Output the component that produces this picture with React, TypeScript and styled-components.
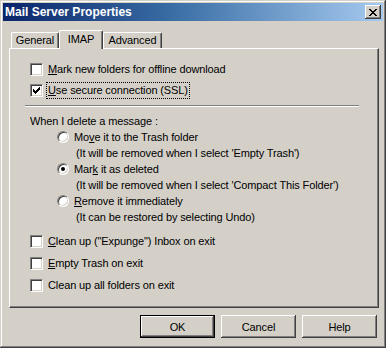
import React from "react";
import styled, { createGlobalStyle } from "styled-components";

const GlobalStyle = createGlobalStyle`
    html, body {
        margin: 0;
        padding: 0;
        background-color: #d4d0c8;
    }
    * {
        box-sizing: border-box;
    }
`

const FONT = `"Liberation Sans", Arial, sans-serif`;

const Window = styled.div`
    width: 386px;
    height: 348px;
    padding: 3px;
    background-color: #d4d0c8;
    font-family: ${FONT};
    font-size: 11px;
    letter-spacing: -0.12px;
    color: #000;
    box-shadow:
        inset -1px -1px #404040,
        inset 1px 1px #d4d0c8,
        inset -2px -2px #808080,
        inset 2px 2px #ffffff;
`

const TitleBar = styled.div`
    height: 18px;
    display: flex;
    align-items: center;
    justify-content: space-between;
    padding: 0 2px 0 2px;
    background: linear-gradient(to right, #0a246a 0%, #3a6ea5 45%, #a6caf0 100%);
    color: white;
    font-weight: bold;
    font-size: 12px;
    letter-spacing: 0;
    white-space: nowrap;
`

const CloseButton = styled.div`
    width: 16px;
    height: 14px;
    display: flex;
    align-items: center;
    justify-content: center;
    background-color: #d4d0c8;
    box-shadow:
        inset -1px -1px #404040,
        inset 1px 1px #ffffff,
        inset -2px -2px #808080;
`

const Body = styled.div`
    padding: 9px 5px 0 6px;
`

const TabRow = styled.div`
    display: flex;
    align-items: flex-end;
    height: 18px;
    padding-left: 2px;
    position: relative;
    z-index: 1;
`

const Tab = styled.div<{ $width: number; $selected?: boolean }>`
    width: ${p => p.$width}px;
    height: ${p => (p.$selected ? 19 : 16)}px;
    margin-bottom: ${p => (p.$selected ? -1 : 0)}px;
    display: flex;
    justify-content: center;
    padding-top: ${p => (p.$selected ? 2 : 1)}px;
    background-color: #d4d0c8;
    border-top: 1px solid #ffffff;
    border-left: 1px solid #ffffff;
    border-right: 1px solid #404040;
    border-top-left-radius: 2px;
    border-top-right-radius: 2px;
    box-shadow: inset -1px 0 #808080;
    line-height: 13px;
`

const Panel = styled.div`
    width: 370px;
    height: 260px;
    padding: 12px 0 0 20px;
    border-top: 1px solid #ffffff;
    border-left: 1px solid #ffffff;
    border-right: 1px solid #404040;
    border-bottom: 1px solid #404040;
    box-shadow: inset -1px -1px #808080;
    display: flex;
    flex-direction: column;
`

const Row = styled.div<{ $top?: number; $indent?: number }>`
    height: 16px;
    display: flex;
    align-items: center;
    gap: 5px;
    margin-top: ${p => p.$top ?? 0}px;
    margin-left: ${p => p.$indent ?? 0}px;
    white-space: nowrap;
`

const Label = styled.span<{ $focus?: boolean }>`
    line-height: 13px;
    padding: 1px 1px;
    margin-left: -2px;
    border: 1px dotted ${p => (p.$focus ? "#000" : "transparent")};
`

const Note = styled.div`
    height: 16px;
    display: flex;
    align-items: center;
    margin-left: 46px;
    white-space: nowrap;
`

const Heading = styled.div`
    height: 16px;
    display: flex;
    align-items: center;
    margin-top: 6px;
`

const Separator = styled.div`
    width: 334px;
    height: 2px;
    margin: 7px 0 0 -5px;
    border-top: 1px solid #808080;
    border-bottom: 1px solid #ffffff;
`

const CheckBox = styled.div`
    width: 13px;
    height: 13px;
    flex: none;
    display: flex;
    align-items: center;
    justify-content: center;
    background-color: white;
    border-top: 1px solid #808080;
    border-left: 1px solid #808080;
    border-right: 1px solid #ffffff;
    border-bottom: 1px solid #ffffff;
    box-shadow: inset 1px 1px #404040, inset -1px -1px #d4d0c8;
`

const Radio = styled.div`
    width: 12px;
    height: 12px;
    flex: none;
    display: flex;
    align-items: center;
    justify-content: center;
    border-radius: 50%;
    background-color: white;
    border-top: 1px solid #808080;
    border-left: 1px solid #808080;
    border-right: 1px solid #ffffff;
    border-bottom: 1px solid #ffffff;
    box-shadow: inset 1px 1px #404040, inset -1px -1px #d4d0c8;
`

const Dot = styled.div`
    width: 4px;
    height: 4px;
    border-radius: 50%;
    background-color: #000;
`

const ButtonRow = styled.div`
    width: 370px;
    display: flex;
    justify-content: flex-end;
    gap: 6px;
    margin-top: 7px;
    padding-right: 2px;
`

const Button = styled.div<{ $default?: boolean }>`
    width: 75px;
    height: 23px;
    display: flex;
    align-items: center;
    justify-content: center;
    background-color: #d4d0c8;
    border: ${p => (p.$default ? "1px solid #000" : "none")};
    box-shadow:
        inset -1px -1px #404040,
        inset 1px 1px #ffffff,
        inset -2px -2px #808080;
`

const CheckMark = () => (
    <svg width="7" height="7" viewBox="0 0 7 7" shapeRendering="crispEdges">
        {[2, 3, 4, 3, 2, 1, 0].map((y, x) => (
            <rect key={x} x={x} y={y} width="1" height="3" fill="#000" />
        ))}
    </svg>
)

const CloseGlyph = () => (
    <svg width="8" height="7" viewBox="0 0 8 7" shapeRendering="crispEdges">
        <rect x="0" y="0" width="2" height="1" />
        <rect x="6" y="0" width="2" height="1" />
        <rect x="1" y="1" width="2" height="1" />
        <rect x="5" y="1" width="2" height="1" />
        <rect x="2" y="2" width="4" height="1" />
        <rect x="3" y="3" width="2" height="1" />
        <rect x="2" y="4" width="4" height="1" />
        <rect x="1" y="5" width="2" height="1" />
        <rect x="5" y="5" width="2" height="1" />
        <rect x="0" y="6" width="2" height="1" />
        <rect x="6" y="6" width="2" height="1" />
    </svg>
)

export default function App() {
    return (
        <>
            <GlobalStyle />
            <Window>
                <TitleBar>
                    <span>Mail Server Properties</span>
                    <CloseButton><CloseGlyph /></CloseButton>
                </TitleBar>
                <Body>
                    <TabRow>
                        <Tab $width={48}>General</Tab>
                        <Tab $width={44} $selected>IMAP</Tab>
                        <Tab $width={59}>Advanced</Tab>
                    </TabRow>
                    <Panel>
                        <Row>
                            <CheckBox />
                            <Label><u>M</u>ark new folders for offline download</Label>
                        </Row>
                        <Row $top={5}>
                            <CheckBox><CheckMark /></CheckBox>
                            <Label $focus><u>U</u>se secure connection (SSL)</Label>
                        </Row>
                        <Separator />
                        <Heading>When I delete a message :</Heading>
                        <Row $indent={27}>
                            <Radio />
                            <Label>Mo<u>v</u>e it to the Trash folder</Label>
                        </Row>
                        <Note>(It will be removed when I select 'Empty Trash')</Note>
                        <Row $indent={27}>
                            <Radio><Dot /></Radio>
                            <Label>Mar<u>k</u> it as deleted</Label>
                        </Row>
                        <Note>(It will be removed when I select 'Compact This Folder')</Note>
                        <Row $indent={27}>
                            <Radio />
                            <Label><u>R</u>emove it immediately</Label>
                        </Row>
                        <Note>(It can be restored by selecting Undo)</Note>
                        <Row $top={8}>
                            <CheckBox />
                            <Label><u>C</u>lean up ("Expunge") Inbox on exit</Label>
                        </Row>
                        <Row $top={6}>
                            <CheckBox />
                            <Label><u>E</u>mpty Trash on exit</Label>
                        </Row>
                        <Row $top={6}>
                            <CheckBox />
                            <Label>Clean up all folders on exit</Label>
                        </Row>
                    </Panel>
                    <ButtonRow>
                        <Button $default>OK</Button>
                        <Button>Cancel</Button>
                        <Button>Help</Button>
                    </ButtonRow>
                </Body>
            </Window>
        </>
    );
}
